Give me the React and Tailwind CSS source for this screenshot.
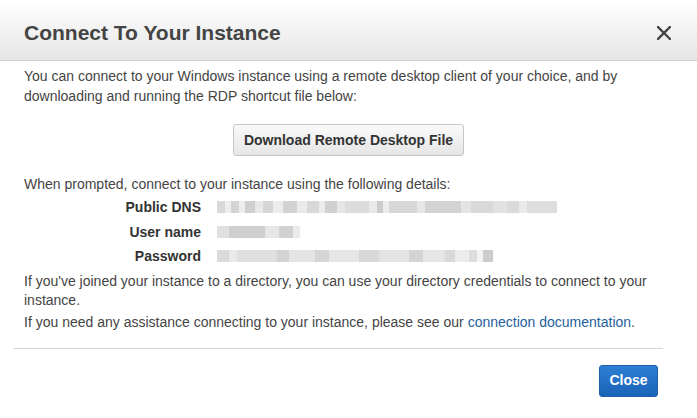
// App.jsx
const font = { fontFamily: '"Liberation Sans", Arial, sans-serif' };

// Redacted value: a strip of soft grey blocks
function Masked({ blocks }) {
  return (
    <div className="flex h-[12px] items-stretch">
      {blocks.map(([w, c], i) => (
        <span key={i} className="block h-full" style={{ width: w, background: c }} />
      ))}
    </div>
  );
}

const dns = [
  [8, "#d9d9d9"], [6, "#eeeeee"], [8, "#d4d4d4"], [6, "#eeeeee"], [10, "#cfcfcf"], [8, "#e8e8e8"],
  [10, "#d6d6d6"], [10, "#ececec"], [14, "#d2d2d2"], [10, "#eaeaea"], [12, "#d8d8d8"], [6, "#ebebeb"],
  [12, "#d0d0d0"], [8, "#e6e6e6"], [24, "#dcdcdc"], [8, "#e9e9e9"], [6, "#cdcdcd"], [6, "#ededed"],
  [28, "#d7d7d7"], [8, "#e7e7e7"], [36, "#d3d3d3"], [10, "#e4e4e4"], [22, "#d9d9d9"], [14, "#e2e2e2"],
  [12, "#dadada"], [8, "#eaeaea"], [30, "#dedede"],
];
const user = [[12, "#e0e0e0"], [36, "#cfcfcf"], [14, "#e6e6e6"], [14, "#d2d2d2"], [7, "#ebebeb"]];
const pass = [
  [12, "#dadada"], [8, "#e9e9e9"], [40, "#e0e0e0"], [12, "#d3d3d3"], [26, "#e4e4e4"], [14, "#d6d6d6"],
  [30, "#e6e6e6"], [20, "#d8d8d8"], [30, "#e3e3e3"], [14, "#d4d4d4"], [22, "#e6e6e6"], [10, "#d9d9d9"],
  [14, "#ececec"], [8, "#dddddd"], [6, "#f4f4f4"], [10, "#cccccc"],
];

export default function App() {
  return (
    <div className="min-h-screen w-[697px] bg-white text-[14px] text-[#444]" style={font}>
      <div className="flex h-[61px] items-center justify-between border-b border-[#cfcfcf] bg-gradient-to-b from-white to-[#e6e6e6] pl-[24px] pr-[26px] pt-[5px]">
        <h1 className="text-[21px] font-bold text-[#444]">Connect To Your Instance</h1>
        <svg width="14" height="14" viewBox="0 0 14 14" className="text-[#444]">
          <path d="M1 1 L13 13 M13 1 L1 13" stroke="currentColor" strokeWidth="2.4" strokeLinecap="square" />
        </svg>
      </div>

      <div className="px-[24px] pt-[5px] leading-[20px]">
        <p>
          You can connect to your Windows instance using a remote desktop client of your choice, and by
          downloading and running the RDP shortcut file below:
        </p>

        <div className="mt-[18px] flex justify-center">
          <button className="h-[32px] w-[231px] rounded-[3px] border border-[#c6c6c6] bg-gradient-to-b from-[#fafafa] to-[#e6e6e6] text-[14px] font-bold text-[#333]">
            Download Remote Desktop File
          </button>
        </div>

        <p className="mt-[18px]">When prompted, connect to your instance using the following details:</p>

        <div className="mt-[1px] flex flex-col">
          {[
            ["Public DNS", dns],
            ["User name", user],
            ["Password", pass],
          ].map(([label, blocks]) => (
            <div key={label} className="flex h-[24.5px] items-center">
              <span className="w-[177px] text-right font-bold text-[#333]">{label}</span>
              <div className="ml-[16px] blur-[0.6px]">
                <Masked blocks={blocks} />
              </div>
            </div>
          ))}
        </div>

        <p className="mt-[3px] leading-[19px]">
          If you've joined your instance to a directory, you can use your directory credentials to connect to your
          instance.
        </p>
        <p className="mt-[2px]">
          If you need any assistance connecting to your instance, please see our{" "}
          <a className="text-[#1e5f9b]">connection documentation</a>.
        </p>
      </div>

      <div className="mx-[14px] mt-[16px] w-[649px] border-t border-[#d4d4d4]" />

      <div className="flex justify-end pr-[39px] pt-[16px]">
        <button className="h-[32px] w-[59px] rounded-[3px] border border-[#1f5fa8] bg-gradient-to-b from-[#2d7fd4] to-[#1b63b8] text-[14px] font-bold text-white">
          Close
        </button>
      </div>
    </div>
  );
}
